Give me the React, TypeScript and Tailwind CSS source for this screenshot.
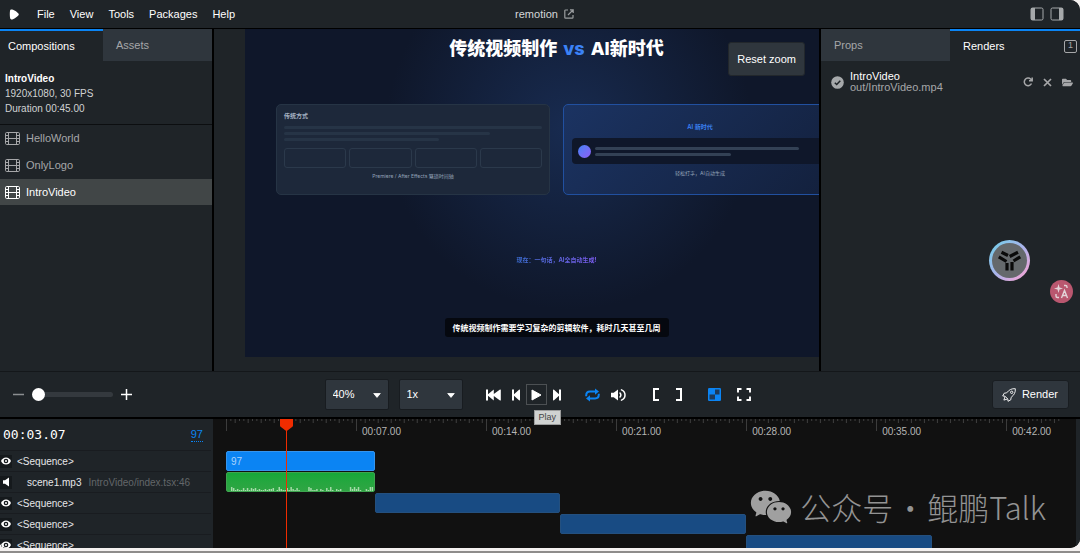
import { AiFillWechat } from "react-icons/ai";
import { FaFolderOpen } from "react-icons/fa";
import clsx from "clsx";

const DURATION = 45;
const CURRENT = 97 / 30;

const MENU = ["File", "View", "Tools", "Packages", "Help"];
const COMPOSITIONS = ["HelloWorld", "OnlyLogo", "IntroVideo"];
const LABELS = ["", "00:07.00", "00:14.00", "00:21.00", "00:28.00", "00:35.00", "00:42.00"];

const CLIPS = [
  { start: 0, end: 8, kind: "active" },
  { start: 0, end: 8, kind: "audio" },
  { start: 8, end: 18, kind: "idle" },
  { start: 18, end: 28, kind: "idle" },
  { start: 28, end: 38, kind: "idle" },
];

const LAYERS = [
  { kind: "sequence", name: "<Sequence>", source: "" },
  { kind: "audio", name: "scene1.mp3", source: "IntroVideo/index.tsx:46" },
  { kind: "sequence", name: "<Sequence>", source: "" },
  { kind: "sequence", name: "<Sequence>", source: "" },
  { kind: "sequence", name: "<Sequence>", source: "" },
];

// audio peaks, in pixels from the bottom of the clip
const PEAKS = [
  0, 0, 4, 3, 1, 2, 1, 1, 3, 1, 3, 1, 3, 2, 3, 1, 2, 1, 1, 2, 1, 2, 2, 3, 0, 1, 4, 2, 1, 1, 3, 1, 4, 2, 1, 3, 1, 0, 0, 0, 0, 4, 3, 1, 1, 2, 0, 2, 1, 0, 3, 1, 4, 1, 0, 2,
  1, 2, 0, 0, 0, 0, 4, 2, 4, 2, 4, 1, 0, 0, 2, 1, 4, 4,
];

const percent = (seconds: number) => `${(seconds / DURATION) * 100}%`;

function FilmIcon() {
  return (
    <svg width="15" height="13" viewBox="0 0 15 13" fill="none" stroke="currentColor" strokeWidth="1" aria-hidden="true">
      <rect x="0.5" y="0.5" width="14" height="12" rx="1.2" />
      <path d="M3.5 .5v12M11.5 .5v12M3.5 6.5h8M.5 3.5h3M.5 6.5h3M.5 9.5h3M11.5 3.5h3M11.5 6.5h3M11.5 9.5h3" />
    </svg>
  );
}

function EyeIcon() {
  return (
    <svg width="10" height="8" viewBox="0 0 10 8" aria-hidden="true">
      <path d="M0 4C1 1.6 2.8.4 5 .4S9 1.6 10 4C9 6.400 7.200 7.600 5 7.600S1 6.400 0 4z" fill="#fff" />
      <circle cx="5" cy="4" r="2.300" fill="#15191c" />
      <circle cx="5" cy="4" r="1" fill="#fff" />
    </svg>
  );
}

function SpeakerIcon() {
  return (
    <svg width="9" height="10" viewBox="0 0 9 10" fill="#fff" aria-hidden="true">
      <path d="M1 3.200h2L7 .5v9L3 6.800H1z" />
    </svg>
  );
}

function MenuBar() {
  return (
    <header className="grid h-[29px] shrink-0 grid-cols-[1fr_auto_1fr] items-center border-b border-black bg-[#1f2428] pr-4 pl-[9px]">
      <nav className="flex items-center">
        <button type="button" aria-label="Remotion" className="mr-[18px]">
          <svg width="10" height="11" viewBox="0 0 10 11" aria-hidden="true">
            <path d="M1 1.800C1.200.5 2.400.2 4 .8c2 .8 4.200 2.200 5.400 3.800.6.8.5 1.300-.1 2C8 8 6 9.400 4 10.200c-1.600.6-2.600.2-2.900-1.200C.7 7 .7 3.800 1 1.800z" fill="#fff" />
          </svg>
        </button>
        <div className="flex gap-[15px]">
          {MENU.map((item) => (
            <button key={item} type="button">
              {item}
            </button>
          ))}
        </div>
      </nav>
      <a href="#remotion" className="ml-4 flex items-center gap-[6px] text-[#d5d7d8]">
        remotion
        <svg width="10" height="10" viewBox="0 0 10 10" fill="none" stroke="#9a9d9f" strokeWidth="1.200" aria-hidden="true">
          <path d="M4 1H1.600a.8.8 0 0 0-.8.8v6.600c0 .5.300.8.8.8h6.600c.5 0 .8-.3.8-.8V6M6 .8h3.200V4M9 1 4 6" />
        </svg>
      </a>
      <div className="flex justify-end gap-[6px] text-[#a6a9ab]">
        <button type="button" aria-label="Toggle left sidebar">
          <svg width="14" height="14" viewBox="0 0 14 14" aria-hidden="true">
            <rect x="1" y="1" width="12" height="12" rx="1.500" fill="none" stroke="currentColor" />
            <path d="M1 1h4v12H1z" fill="currentColor" />
          </svg>
        </button>
        <button type="button" aria-label="Toggle right sidebar">
          <svg width="14" height="14" viewBox="0 0 14 14" aria-hidden="true">
            <rect x="1" y="1" width="12" height="12" rx="1.500" fill="none" stroke="currentColor" />
            <path d="M9 1h4v12H9z" fill="currentColor" />
          </svg>
        </button>
      </div>
    </header>
  );
}

function LeftPanel() {
  return (
    <aside className="flex w-[214px] shrink-0 flex-col border-r-2 border-black">
      <div className="flex h-8">
        <button type="button" className="w-[103px] border-t-2 border-[#0b84f3] px-2 text-left">
          Compositions
        </button>
        <button type="button" className="flex-1 bg-[#2f363d] px-[13px] text-left text-[#a6a7a9]">
          Assets
        </button>
      </div>
      <div className="h-16 border-b border-[#0c0e10] px-[5px] pt-[10px] text-[10px] leading-[15px] text-[#d0d2d3]">
        <p className="font-bold text-white">IntroVideo</p>
        <p>1920x1080, 30 FPS</p>
        <p>Duration 00:45.00</p>
      </div>
      <div className="flex flex-col gap-px">
        {COMPOSITIONS.map((name) => (
          <button
            key={name}
            type="button"
            className={clsx(
              "flex h-[26px] items-center gap-[6px] px-[5px]",
              name === "IntroVideo" ? "bg-[#414647] text-white" : "text-[#a6a7a9]",
            )}
          >
            <FilmIcon />
            {name}
          </button>
        ))}
      </div>
    </aside>
  );
}

function Composition() {
  return (
    <div className="flex h-[328px] w-[623px] shrink-0 flex-col items-center bg-[#0f172a] bg-[radial-gradient(circle_at_52%_30%,#182b50_0%,#0f172a_46%)] font-['Inter','Noto_Sans_CJK_SC',sans-serif]">
      <h1 className="mt-2 flex h-6 items-center gap-[6px] text-[18px] leading-6 font-extrabold text-white">
        <span>传统视频制作</span>
        <span className="text-[#3b82f6]">vs</span>
        <span>AI新时代</span>
      </h1>
      <div className="mt-[43px] grid w-full grid-cols-2 gap-[13px] px-[31px]">
        <section className="h-[91px] rounded-[5px] border border-[#263445] bg-[#1d283a] px-[7px] pt-[7px]">
          <h2 className="text-[6px] leading-2 font-semibold text-[#a3afc0]">传统方式</h2>
          <div className="mt-[6px] flex flex-col gap-[3px]">
            <div className="h-[3px] rounded-full bg-[#263446]" />
            <div className="h-[3px] w-4/5 rounded-full bg-[#263446]" />
            <div className="h-[3px] w-3/5 rounded-full bg-[#263446]" />
          </div>
          <div className="mt-[7px] grid grid-cols-4 gap-[3px]">
            {[0, 1, 2, 3].map((i) => (
              <div key={i} className="h-5 rounded-[3px] border border-[#2b394b]" />
            ))}
          </div>
          <p className="mt-1 text-center text-[5px] leading-2 text-[#94a3b8]">Premiere / After Effects 繁琐时间轴</p>
        </section>
        <section className="h-[91px] rounded-[5px] border border-[#2150a0] bg-linear-135 from-[#1b3362] to-[#13203c] px-2 pt-[18px]">
          <h2 className="text-center text-[6px] leading-2 font-semibold text-[#3b82f6]">AI 新时代</h2>
          <div className="mt-[7px] flex h-[26px] items-center gap-1 rounded-[4px] bg-[#0f172a] px-[6px]">
            <div className="size-[13px] rounded-full bg-linear-135 from-[#3b82f6] to-[#8b5cf6]" />
            <div className="flex flex-1 flex-col gap-[3px]">
              <div className="h-[3px] w-9/10 rounded-full bg-[#334155]" />
              <div className="h-[3px] w-3/5 rounded-full bg-[#334155]" />
            </div>
          </div>
          <p className="mt-[5px] text-center text-[5px] leading-2 text-[#94a3b8]">轻松打字，AI自动生成</p>
        </section>
      </div>
      <p className="mt-[61px] bg-linear-to-r from-[#3b6fd6] to-[#7c5cf0] bg-clip-text text-[6px] leading-2 font-bold text-transparent">
        现在：一句话，AI全自动生成!
      </p>
      <p className="mt-[54px] flex h-[19px] items-center rounded-[3px] bg-[#05080f] px-2 text-[8px] leading-3 font-bold text-white">
        传统视频制作需要学习复杂的剪辑软件，耗时几天甚至几周
      </p>
    </div>
  );
}

function Preview() {
  return (
    <main className="relative min-w-0 flex-1 overflow-hidden pb-[14px] pl-[31px]">
      <Composition />
      <button
        type="button"
        className="absolute top-[13px] right-[14px] h-[34px] rounded-[3px] border border-[#22272c] bg-[#2f363d] px-2"
      >
        Reset zoom
      </button>
    </main>
  );
}

function RightPanel() {
  return (
    <aside className="flex w-[261px] shrink-0 flex-col border-l-2 border-black">
      <div className="flex h-8">
        <button type="button" className="w-[129px] bg-[#2f363d] px-[13px] text-left text-[#a6a7a9]">
          Props
        </button>
        <button type="button" className="flex flex-1 items-center justify-between border-t-2 border-[#0b84f3] pr-[3px] pl-[13px]">
          Renders
          <span className="flex size-[13px] items-center justify-center rounded-[2px] border border-[#a6a7a9] text-[9px] text-[#a6a7a9]">
            1
          </span>
        </button>
      </div>
      <div className="flex items-center pt-[10px] pr-[7px] pl-[10px] text-[#a6a7a9]">
        <svg width="13" height="13" viewBox="0 0 13 13" aria-hidden="true">
          <circle cx="6.500" cy="6.500" r="6.300" fill="#a6a9ab" />
          <path d="M3.800 6.700 5.700 8.500 9.300 4.700" fill="none" stroke="#1f2428" strokeWidth="1.500" />
        </svg>
        <div className="ml-[6px] flex-1 leading-[11px]">
          <p className="text-white">IntroVideo</p>
          <p>out/IntroVideo.mp4</p>
        </div>
        <div className="flex items-center gap-[10px]">
          <button type="button" aria-label="Retry render">
            <svg width="10" height="10" viewBox="0 0 10 10" fill="none" stroke="currentColor" strokeWidth="1.500" aria-hidden="true">
              <path d="M8.500 6.500A3.800 3.800 0 1 1 7.800 2.200L9 3.600M9.200.6v3.200H6" />
            </svg>
          </button>
          <button type="button" aria-label="Remove render">
            <svg width="9" height="9" viewBox="0 0 9 9" stroke="currentColor" strokeWidth="1.700" aria-hidden="true">
              <path d="m1 1 7 7M8 1 1 8" />
            </svg>
          </button>
          <button type="button" aria-label="Open folder">
            <FaFolderOpen size={11} />
          </button>
        </div>
      </div>
    </aside>
  );
}

function Dropdown({ label, value }: { label: string; value: string }) {
  return (
    <div className="relative">
      <select
        aria-label={label}
        defaultValue={value}
        className="block h-[31px] w-16 appearance-none rounded-[2px] border border-[#181c20] bg-[#2f363d] px-[7px] text-white"
      >
        <option>{value}</option>
      </select>
      <svg width="8" height="5" viewBox="0 0 8 5" className="pointer-events-none absolute top-[14px] right-2" aria-hidden="true">
        <path d="M.7.500h6.600L4 4.400z" fill="#fff" stroke="#fff" strokeWidth=".800" strokeLinejoin="round" />
      </svg>
    </div>
  );
}

function Toolbar() {
  return (
    <div className="grid h-[48px] shrink-0 grid-cols-[1fr_auto_1fr] items-center border-t border-b-2 border-t-[#14171a] border-b-black bg-[#1f2428] pr-[11px] pl-[6px]">
      <div className="flex items-center">
        <button type="button" aria-label="Zoom out" className="px-[7px]">
          <svg width="11" height="11" viewBox="0 0 11 11" aria-hidden="true">
            <path d="M0 5.500h11" stroke="#8b8e90" strokeWidth="1.500" />
          </svg>
        </button>
        <input
          type="range"
          aria-label="Timeline zoom"
          defaultValue={0}
          className="ml-px h-[5px] w-[81px] appearance-none rounded-full bg-[#34393e] [&::-webkit-slider-thumb]:size-[13px] [&::-webkit-slider-thumb]:appearance-none [&::-webkit-slider-thumb]:rounded-full [&::-webkit-slider-thumb]:bg-white"
        />
        <button type="button" aria-label="Zoom in" className="ml-2">
          <svg width="11" height="11" viewBox="0 0 11 11" aria-hidden="true">
            <path d="M0 5.500h11M5.500 0v11" stroke="#fff" strokeWidth="1.500" />
          </svg>
        </button>
      </div>

      <div className="flex items-center">
        <div className="flex gap-[10px]">
          <Dropdown label="Preview size" value="40%" />
          <Dropdown label="Playback rate" value="1x" />
        </div>
        <button type="button" aria-label="Jump to beginning" className="ml-[23px]">
          <svg width="15" height="12" viewBox="0 0 15 12" fill="#fff" aria-hidden="true">
            <path d="M0 .5h2v4.800L7.800.5v4.600L14 .5q.8-.3.800.5v10q0 .8-.8.500L7.800 6.900v4.600L2 6.700v4.800H0z" />
          </svg>
        </button>
        <button type="button" aria-label="Step back" className="ml-[11px]">
          <svg width="8" height="12" viewBox="0 0 8 12" fill="#fff" aria-hidden="true">
            <path d="M0 .5h2v4.700L7 .7q1-.5 1 .5v9.600q0 1-1 .5L2 6.800v4.700H0z" />
          </svg>
        </button>
        <div className="relative ml-[6px]">
          <button
            type="button"
            aria-label="Play"
            className="flex size-[21px] items-center justify-center border border-[#4c5053]"
          >
            <svg width="11" height="12" viewBox="0 0 11 12" aria-hidden="true">
              <path d="M1 1v10l9-5z" fill="#fff" stroke="#fff" strokeLinejoin="round" />
            </svg>
          </button>
          <span
            role="tooltip"
            className="absolute top-[26px] left-2 z-20 border border-[#9b9c9c] bg-[#d0d2d1] px-1 text-[9px] leading-[13px] text-[#444]"
          >
            Play
          </span>
        </div>
        <button type="button" aria-label="Step forward" className="ml-[6px]">
          <svg width="8" height="12" viewBox="0 0 8 12" fill="#fff" aria-hidden="true">
            <path d="M8 .5H6v4.700L1 .7q-1-.5-1 .5v9.600q0 1 1 .5l5-4.500v4.700h2z" />
          </svg>
        </button>
        <button type="button" aria-label="Loop" className="ml-6">
          <svg width="15" height="14" viewBox="0 0 15 14" fill="none" stroke="#0b84f3" strokeWidth="2" aria-hidden="true">
            <path d="M1.200 8.200V7.500Q1.200 3.600 5 3.600h6M13.800 5.800v.7q0 3.900-3.800 3.900H4" />
            <path d="M10 .4v6.400l4-3.200zM5 7.200v6.400L1 10.400z" fill="#0b84f3" stroke="none" />
          </svg>
        </button>
        <button type="button" aria-label="Mute" className="ml-[11px]">
          <svg width="15" height="12" viewBox="0 0 15 12" aria-hidden="true">
            <path d="M0 3.800h2.700L7 .4v11.200L2.700 8.200H0z" fill="#fff" />
            <path d="M9 4q1.700 2 0 4M10.500.9q3.500 1.500 3.500 5.100t-3.500 5.100" fill="none" stroke="#fff" strokeWidth="1.500" strokeLinecap="round" />
          </svg>
        </button>
        <button type="button" aria-label="Mark in" className="ml-[27px]">
          <svg width="6" height="13" viewBox="0 0 6 13" aria-hidden="true">
            <path d="M6 1H1v11h5" fill="none" stroke="#fff" strokeWidth="2" />
          </svg>
        </button>
        <button type="button" aria-label="Mark out" className="ml-[17px]">
          <svg width="6" height="13" viewBox="0 0 6 13" aria-hidden="true">
            <path d="M0 1h5v11H0" fill="none" stroke="#fff" strokeWidth="2" />
          </svg>
        </button>
        <button type="button" aria-label="Toggle transparency" className="ml-[26px]">
          <svg width="13" height="13" viewBox="0 0 13 13" aria-hidden="true">
            <rect width="13" height="13" rx="1.200" fill="#0b84f3" />
            <path d="M7 1.500h4.500V6.500H7zM1.500 6.500H7v5H1.500z" fill="#1d3a5a" />
          </svg>
        </button>
        <button type="button" aria-label="Fullscreen" className="ml-4">
          <svg width="14" height="13" viewBox="0 0 14 13" aria-hidden="true">
            <path d="M1 4.500V1h3.500M9.500 1H13v3.500M13 8.500V12H9.500M4.500 12H1V8.500" fill="none" stroke="#fff" strokeWidth="1.900" />
          </svg>
        </button>
      </div>

      <button
        type="button"
        className="flex h-[29px] items-center gap-[6px] justify-self-end rounded-[3px] border border-[#191d21] bg-[#2f363d] pr-[10px] pl-[9px]"
      >
        <svg width="14" height="14" viewBox="0 0 14 14" fill="none" stroke="#fff" strokeWidth=".900" strokeLinejoin="round" aria-hidden="true">
          <path d="M13.300.7C9.800.4 7.200 1.600 4.600 4.900L2.200 5.200.7 8l2.300.200L5.800 11l.2 2.300 2.800-1.500.3-2.400c3.300-2.600 4.500-5.200 4.200-8.700z" />
          <circle cx="9.700" cy="4.300" r="1.200" />
          <path d="M3 8.600 1.900 12.100 5.400 11" />
        </svg>
        Render
      </button>
    </div>
  );
}

function LayerList() {
  return (
    <div className="flex w-[213px] shrink-0 flex-col overflow-hidden bg-[#1f2428] pr-[2px] text-[10px]">
      <div className="flex h-8 shrink-0 items-center justify-between border-b border-[#191c20] pr-2 pl-[3px]">
        <span className="font-['DejaVu_Sans_Mono',monospace] text-[13px]">00:03.07</span>
        <button type="button" className="border-b border-dotted border-[#0b84f3] text-[11px] leading-[14px] text-[#0b84f3]">
          97
        </button>
      </div>
      {LAYERS.map((layer, i) => (
        <div key={i} className="flex h-[21px] shrink-0 items-center border-b border-[#191c20] text-[#e6e7e8]">
          <button
            type="button"
            aria-label={layer.kind === "audio" ? "Mute layer" : "Hide layer"}
            className="flex h-[13px] w-3 items-center justify-center bg-[#15191c]"
          >
            {layer.kind === "audio" ? <SpeakerIcon /> : <EyeIcon />}
          </button>
          <span className={layer.kind === "audio" ? "ml-[15px]" : "ml-[5px]"}>{layer.name}</span>
          {layer.source && <span className="ml-[7px] text-[#63676a]">{layer.source}</span>}
        </div>
      ))}
    </div>
  );
}

function Ruler() {
  // one tick every seven frames, every third one taller
  const ticks = Array.from({ length: 193 }, (_, i) => i);
  return (
    <div className="relative h-8 shrink-0">
      <svg className="absolute inset-x-0 top-0 h-1 w-full" aria-hidden="true">
        {ticks.map((i) => (
          <rect key={i} x={percent((i * 7) / 30)} width="1" height={i % 3 === 2 ? 4 : 2} fill="#404040" />
        ))}
      </svg>
      <div className="flex">
        {LABELS.map((label, i) => (
          <div key={i} className="h-3 shrink-0 border-l border-[#3c3c3c]" style={{ width: percent(7) }}>
            <span className="block pt-[6px] pl-[5px] text-[10px] leading-[14px] text-[#b5b5b5]">{label}</span>
          </div>
        ))}
      </div>
    </div>
  );
}

function Timeline() {
  return (
    <div className="flex min-h-0 flex-1">
      <LayerList />
      <div className="relative min-w-0 flex-1 overflow-hidden border-r-4 border-[#1f2428] bg-[#111] pr-[14px] pl-[13px]">
        <div className="relative flex h-full flex-col">
          <Ruler />
          {CLIPS.map((clip, i) => (
            <div
              key={i}
              className={clsx(
                "mb-px flex h-5 shrink-0 items-center overflow-hidden rounded-[2px] border text-[10px] text-[#a9d2fb]",
                clip.kind === "active" && "border-[#3595ee] bg-[#0b84f3] px-1",
                clip.kind === "audio" && "items-end border-[#3fa550] bg-linear-to-b from-[#16a83a] to-[#2fa544]",
                clip.kind === "idle" && "border-[#24507f] bg-[#184b83]",
              )}
              style={{ marginLeft: percent(clip.start), width: percent(clip.end - clip.start) }}
            >
              {clip.kind === "active" && "97"}
              {clip.kind === "audio" && (
                <svg className="h-1 w-full" viewBox="0 0 148 4" preserveAspectRatio="none" aria-hidden="true">
                  {PEAKS.map((peak, p) => (
                    <rect key={p} x={p * 2} y={4 - peak} width="1.500" height={peak} fill="#a5dba9" />
                  ))}
                </svg>
              )}
            </div>
          ))}
          <div className="absolute inset-y-0 w-px bg-[#f02c00]" style={{ left: percent(CURRENT) }}>
            <svg width="13" height="12" viewBox="0 0 13 12" className="absolute top-0 -left-[6px]" aria-hidden="true">
              <path d="M0 0h13v6.500q0 .7-.6 1.200L7.500 11.500q-1 .8-2 0L.6 7.700Q0 7.200 0 6.500z" fill="#f02c00" />
            </svg>
          </div>
        </div>
      </div>
    </div>
  );
}

function Watermark() {
  return (
    <div className="pointer-events-none absolute right-[34px] bottom-[18px] flex items-center font-['Noto_Sans_CJK_SC',sans-serif] text-[31px] leading-10 font-light text-[#939393]">
      <AiFillWechat size={46} className="mr-[6px] text-[#a0a0a0]" />
      <span>公众号</span>
      <span className="w-[34px] text-center">·</span>
      <span>鲲鹏Talk</span>
    </div>
  );
}

function FloatingButtons() {
  return (
    <>
      <button
        type="button"
        aria-label="Assistant"
        className="absolute top-[240px] right-[50px] flex size-[41px] items-center justify-center rounded-full bg-linear-135 from-[#62d0e8] via-[#a9b4ec] to-[#ff9fd0] p-[3px]"
      >
        <span className="flex size-full items-center justify-center rounded-full bg-[#65696c]">
          <svg width="25" height="22" viewBox="0 0 25 22" fill="none" stroke="#0a0a0a" strokeWidth="3.200" aria-hidden="true">
            <path d="M4.500 2.300 11 5.500M21 2.300l-8.300 4.200M1.800 6.800l7.700 4.700M23.300 6.800l-6.800 4.200M10 13v7.500M15 12v8.500" />
          </svg>
        </span>
      </button>
      <button
        type="button"
        aria-label="Translate"
        className="absolute top-[280px] right-[7px] flex size-[23px] items-center justify-center rounded-full bg-[#b9576f]"
      >
        <svg width="15" height="15" viewBox="0 0 15 15" aria-hidden="true">
          <path d="M4.500 0 5.500 3.500 9 4.500 5.500 5.500 4.500 9 3.500 5.500 0 4.500 3.500 3.500z" fill="#e3d3d8" />
          <path d="M10 1.500h1.500q1.500 0 1.500 1.500v1M2 10v2q0 1.500 1.500 1.500H5M7.500 14l3-7.500 3 7.500M8.500 11.500h4" fill="none" stroke="#e3d3d8" strokeWidth="1.400" />
        </svg>
      </button>
    </>
  );
}

export default function App() {
  return (
    <div className="flex h-screen flex-col border-b-2 border-[#8e8c8b] bg-[#f4f1f0] pb-[3px] font-['Liberation_Sans',Arial,sans-serif] text-[11px] text-white">
      <div className="relative flex min-h-0 flex-1 flex-col overflow-hidden rounded-r-[10px] rounded-bl-[6px] bg-[#1f2428]">
        <MenuBar />
        <div className="flex min-h-0 flex-1">
          <LeftPanel />
          <Preview />
          <RightPanel />
        </div>
        <Toolbar />
        <div className="flex h-[129px] shrink-0 flex-col">
          <Timeline />
        </div>
        <FloatingButtons />
        <Watermark />
      </div>
    </div>
  );
}
